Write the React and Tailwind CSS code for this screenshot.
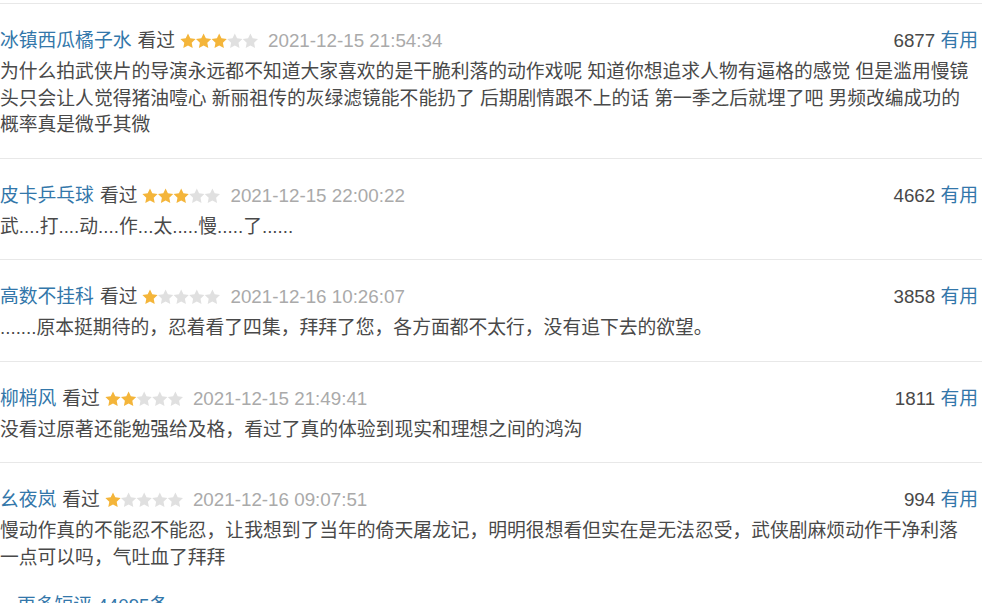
import React from 'react';

const comments = [
    {
        name: '冰镇西瓜橘子水',
        rating: 3,
        time: '2021-12-15 21:54:34',
        votes: 6877,
        text: '为什么拍武侠片的导演永远都不知道大家喜欢的是干脆利落的动作戏呢 知道你想追求人物有逼格的感觉 但是滥用慢镜头只会让人觉得猪油噎心 新丽祖传的灰绿滤镜能不能扔了 后期剧情跟不上的话 第一季之后就埋了吧 男频改编成功的概率真是微乎其微',
    },
    {
        name: '皮卡乒乓球',
        rating: 3,
        time: '2021-12-15 22:00:22',
        votes: 4662,
        text: '武....打....动....作...太.....慢.....了......',
    },
    {
        name: '高数不挂科',
        rating: 1,
        time: '2021-12-16 10:26:07',
        votes: 3858,
        text: '.......原本挺期待的，忍着看了四集，拜拜了您，各方面都不太行，没有追下去的欲望。',
    },
    {
        name: '柳梢风',
        rating: 2,
        time: '2021-12-15 21:49:41',
        votes: 1811,
        text: '没看过原著还能勉强给及格，看过了真的体验到现实和理想之间的鸿沟',
    },
    {
        name: '幺夜岚',
        rating: 1,
        time: '2021-12-16 09:07:51',
        votes: 994,
        text: '慢动作真的不能忍不能忍，让我想到了当年的倚天屠龙记，明明很想看但实在是无法忍受，武侠剧麻烦动作干净利落一点可以吗，气吐血了拜拜',
    },
];

// five-point star in a 16x16 box, a bit chunky like douban's sprite
const STAR = '8,0.5 10.29,5.34 15.61,6.03 11.71,9.71 12.7,14.97 8,12.4 3.3,14.97 4.29,9.71 0.39,6.03 5.71,5.34';

const Stars = ({ rating }) => (
    <svg width="79" height="16" viewBox="0 0 79 16" className="shrink-0 block">
        {[0, 1, 2, 3, 4].map((i) => (
            <polygon
                key={i}
                points={STAR}
                transform={`translate(${i * 15.6} 0)`}
                fill={i < rating ? '#f4b53a' : '#e0e0e0'}
            />
        ))}
    </svg>
);

const Comment = ({ c, last }) => (
    <div className={`w-[982px] pt-[19px] ${last ? 'pb-[22px]' : 'pb-[19px] border-b border-[#e8e8e8]'}`}>
        {/* header: user, rating, time, votes */}
        <div className="h-[36px] flex items-center pr-1">
            <span className="text-[#3377aa]">{c.name}</span>
            <span className="ml-[6px] text-[#494949]">看过</span>
            <span className="ml-[5px]"><Stars rating={c.rating} /></span>
            <span className="ml-[9px] text-[#aaaaaa]">{c.time}</span>
            <span className="ml-auto text-[#494949]">
                {c.votes} <span className="text-[#3377aa]">有用</span>
            </span>
        </div>
        <p className="pr-[9px] leading-[26.5px] text-[#494949]">{c.text}</p>
    </div>
);

const App = () => {
    return (
        <div
            className="w-[1000px] h-[603px] overflow-hidden bg-white pt-[3px] text-[18.8px] leading-[36px]"
            style={{ fontFamily: '"Liberation Sans", "Noto Sans CJK SC", sans-serif' }}
        >
            <div className="w-[982px] border-t border-[#e8e8e8]"></div>
            {comments.map((c, i) => (
                <Comment key={i} c={c} last={i === comments.length - 1} />
            ))}
            <div className="flex items-center leading-[26px]">
                <span className="text-[#494949] text-[12px] w-[17px]">▸</span>
                <span className="text-[#3377aa]">更多短评 44095条</span>
            </div>
        </div>
    );
};

export default App;
